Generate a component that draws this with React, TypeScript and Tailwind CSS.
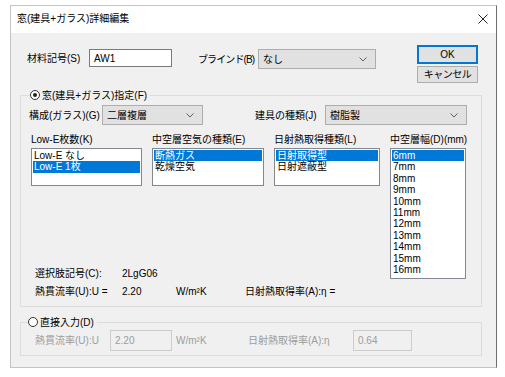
import React from "react";

const airTypes = ["断熱ガス", "乾燥空気"];
const solarTypes = ["日射取得型", "日射遮蔽型"];
const lowE = ["Low-E なし", "Low-E 1枚"];
const widths = ["6mm", "7mm", "8mm", "9mm", "10mm", "11mm", "12mm", "13mm", "14mm", "15mm", "16mm"];

function Chevron() {
  return (
    <svg width="8" height="5" viewBox="0 0 8 5" className="shrink-0">
      <polyline points="0.5,0.5 4,4 7.5,0.5" fill="none" stroke="#606060" strokeWidth="1" />
    </svg>
  );
}

function Select({ value, w }: { value: string; w: string }) {
  return (
    <div className={`${w} h-[20px] bg-[#e1e1e1] border border-[#adadad] flex items-center justify-between pl-[4px] pr-[8px]`}>
      <span>{value}</span>
      <Chevron />
    </div>
  );
}

function ListBox({ items, selected, w, h }: { items: string[]; selected: number; w: string; h: string }) {
  return (
    <div className={`${w} ${h} bg-white border border-[#828790] p-[1px]`}>
      {items.map((it, i) => (
        <div
          key={it}
          className={`h-[11.4px] leading-[11.4px] pl-[1px] ${
            i === selected ? "bg-[#0078d7] text-white" : ""
          }`}
        >
          {it}
        </div>
      ))}
    </div>
  );
}

function Radio({ checked }: { checked?: boolean }) {
  return (
    <span className="w-[10px] h-[10px] rounded-full border border-[#333] bg-white flex items-center justify-center shrink-0">
      {checked && <span className="w-[4px] h-[4px] rounded-full bg-[#222]" />}
    </span>
  );
}

export default function App() {
  return (
    <div className="w-[505px] h-[377px] bg-white pt-[5px] pl-[10px] text-[10px] text-black whitespace-nowrap font-['Liberation_Sans','Noto_Sans_CJK_JP',sans-serif]">
      <div className="w-[487px] h-[363px] border border-[#c4c4c4] border-r-[#6e6e6e] bg-[#f0f0f0] flex flex-col">
        {/* title bar */}
        <div className="h-[27px] bg-white flex items-center justify-between pl-[6px] pr-[8px] pb-[2px] shrink-0">
          <span>窓(建具+ガラス)詳細編集</span>
          <svg width="10" height="10" viewBox="0 0 10 10">
            <line x1="0.5" y1="0.5" x2="9.5" y2="9.5" stroke="#222" strokeWidth="1" />
            <line x1="9.5" y1="0.5" x2="0.5" y2="9.5" stroke="#222" strokeWidth="1" />
          </svg>
        </div>

        <div className="flex flex-col pl-[9px] pr-[14px]">
          {/* top row */}
          <div className="flex items-start mt-[12px] ml-[7px]">
            <span className="w-[62px] h-[18px] mt-[4px] flex items-center">材料記号(S)</span>
            <div className="w-[83px] h-[18px] mt-[4px] bg-white border border-[#7a7a7a] flex items-center pl-[4px]">AW1</div>
            <span className="w-[60px] h-[20px] mt-[4px] ml-[26px] flex items-center tracking-[-0.9px]">ブラインド(B)</span>
            <div className="mt-[4px]">
              <Select value="なし" w="w-[118px]" />
            </div>
            <div className="ml-[41px] w-[61px] flex flex-col gap-[2px]">
              <div className="h-[19px] bg-[#e1e1e1] border border-[#0078d7] shadow-[inset_0_0_0_1px_#0078d7] flex items-center justify-center">OK</div>
              <div className="h-[17px] bg-[#e1e1e1] border border-[#adadad] flex items-center justify-center tracking-[-0.5px]">キャンセル</div>
            </div>
          </div>

          {/* group 1 */}
          <div className="relative mt-[12px] h-[212px] border border-[#dcdcdc] flex flex-col">
            <div className="absolute left-[9px] top-[-8px] h-[14px] flex items-center gap-[2px] bg-[#f0f0f0] pr-[3px]">
              <Radio checked />
              <span>窓(建具+ガラス)指定(F)</span>
            </div>

            <div className="flex items-center mt-[9px] ml-[8px]">
              <span className="w-[73px]">構成(ガラス)(G)</span>
              <Select value="二層複層" w="w-[101px]" />
              <span className="w-[70px] ml-[52px]">建具の種類(J)</span>
              <Select value="樹脂製" w="w-[142px]" />
            </div>

            <div className="flex items-start mt-[9px] ml-[10px] gap-[10px]">
              <div className="flex flex-col">
                <div className="flex gap-[10px]">
                  <div className="flex flex-col">
                    <span className="h-[12px] leading-[12px]">Low-E枚数(K)</span>
                    <div className="mt-[2px]">
                      <ListBox items={lowE} selected={1} w="w-[111px]" h="h-[38px]" />
                    </div>
                  </div>
                  <div className="flex flex-col">
                    <span className="h-[12px] leading-[12px]">中空層空気の種類(E)</span>
                    <div className="mt-[2px]">
                      <ListBox items={airTypes} selected={0} w="w-[112px]" h="h-[38px]" />
                    </div>
                  </div>
                  <div className="flex flex-col">
                    <span className="h-[12px] leading-[12px]">日射熱取得種類(L)</span>
                    <div className="mt-[2px]">
                      <ListBox items={solarTypes} selected={0} w="w-[106px]" h="h-[38px]" />
                    </div>
                  </div>
                </div>

                <div className="flex mt-[82px] ml-[4px] h-[12px] leading-[12px]">
                  <span className="w-[87px]">選択肢記号(C):</span>
                  <span>2LgG06</span>
                </div>
                <div className="flex mt-[6px] ml-[4px] h-[12px] leading-[12px]">
                  <span className="w-[87px]">熱貫流率(U):U =</span>
                  <span className="w-[54px]">2.20</span>
                  <span className="w-[69px]">W/m²K</span>
                  <span>日射熱取得率(A):η =</span>
                </div>
              </div>

              <div className="flex flex-col">
                <span className="h-[12px] leading-[12px]">中空層幅(D)(mm)</span>
                <div className="mt-[2px]">
                  <ListBox items={widths} selected={0} w="w-[76px]" h="h-[131px]" />
                </div>
              </div>
            </div>
          </div>

          {/* group 2 */}
          <div className="relative mt-[15px] h-[34px] border border-[#dcdcdc] text-[#9d9d9d]">
            <div className="absolute left-[7px] top-[-8px] h-[14px] flex items-center gap-[2px] bg-[#f0f0f0] pr-[3px] text-black">
              <Radio />
              <span>直接入力(D)</span>
            </div>
            <div className="flex items-center mt-[7px] ml-[14px]">
              <span className="w-[75px]">熱貫流率(U):U</span>
              <div className="w-[62px] h-[21px] border border-[#cccccc] flex items-center pl-[4px]">2.20</div>
              <span className="w-[72px] ml-[4px]">W/m²K</span>
              <span className="w-[105px]">日射熱取得率(A):η</span>
              <div className="w-[59px] h-[21px] border border-[#cccccc] flex items-center pl-[4px]">0.64</div>
            </div>
          </div>
        </div>
      </div>
    </div>
  );
}
